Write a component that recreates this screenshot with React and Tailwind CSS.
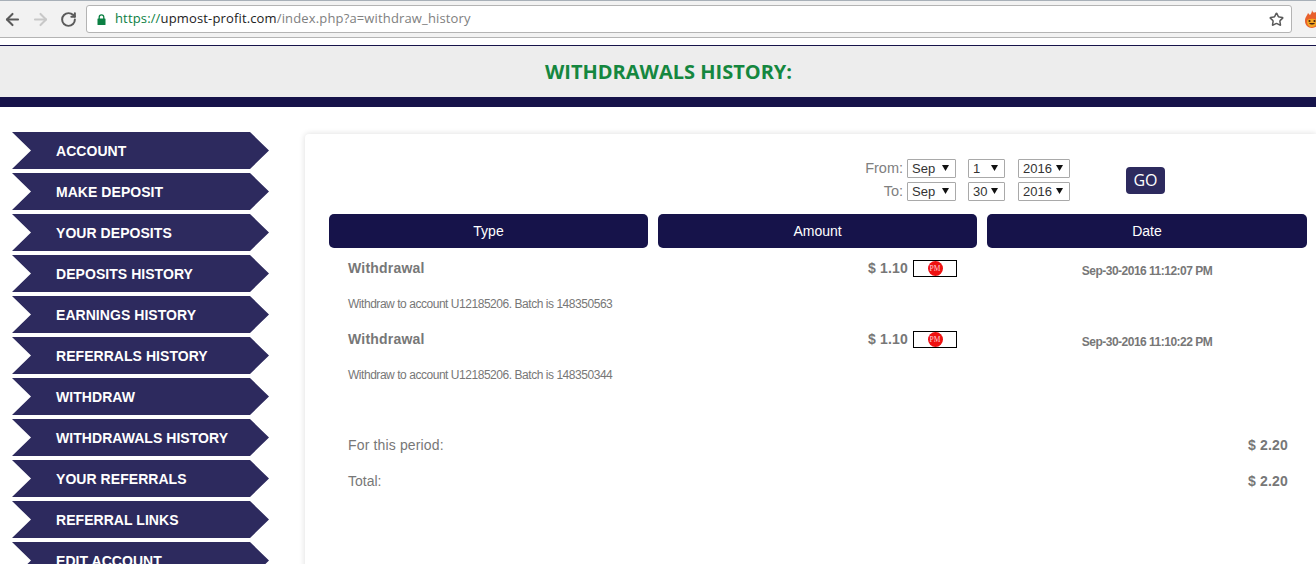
import React from "react";
import { ArrowLeft, ArrowRight, RotateCw, Star } from "lucide-react";

const menu = [
  "ACCOUNT",
  "MAKE DEPOSIT",
  "YOUR DEPOSITS",
  "DEPOSITS HISTORY",
  "EARNINGS HISTORY",
  "REFERRALS HISTORY",
  "WITHDRAW",
  "WITHDRAWALS HISTORY",
  "YOUR REFERRALS",
  "REFERRAL LINKS",
  "EDIT ACCOUNT",
];

const rows = [
  { note: "Withdraw to account U12185206. Batch is 148350563", date: "Sep-30-2016 11:12:07 PM" },
  { note: "Withdraw to account U12185206. Batch is 148350344", date: "Sep-30-2016 11:10:22 PM" },
];

const Drop = ({ value, width }) => (
  <div className={`${width} h-[19px] flex items-center justify-between pl-[4px] pr-[6px] border border-[#a9a9a9] rounded-[1px] bg-white text-[13px] text-[#333]`}>
    <span>{value}</span>
    <svg width="7" height="6" viewBox="0 0 7 6" className="mb-[2px]">
      <path d="M0 0H7L3.5 6Z" fill="#111" />
    </svg>
  </div>
);

const Flame = () => (
  <svg width="16" height="20" viewBox="0 0 16 20">
    <path d="M8 1 C9 4 10 4 12 3 C12 5 15 7 15 12 C15 16 12 19 8 19 C4 19 1 16 1 12 C1 8 3 7 4 4 C5 5 6 6 6 6 C7 5 8 3 8 1Z" fill="#e8602c" />
    <path d="M3 12 C3 9 13 9 13 12 C13 16 11 18 8 18 C5 18 3 16 3 12Z" fill="#f5a623" />
    <circle cx="5.5" cy="12" r="1.1" fill="#4a2410" />
    <circle cx="10.5" cy="12" r="1.1" fill="#4a2410" />
    <path d="M5 14 C6.5 16 9.5 16 11 14Z" fill="#4a2410" />
  </svg>
);

const App = () => {
  return (
    <div className="h-[564px] w-[1316px] overflow-hidden bg-white font-['Liberation_Sans',sans-serif]">
      {/* browser toolbar */}
      <div className="h-[38px] flex items-center bg-[#f2f2f2] border-b border-[#b4b4b4] border-t border-t-[#a8b0b8]">
        <div className="w-[86px] flex items-center gap-[9px] pl-[3px]">
          <ArrowLeft size={19} strokeWidth={2.6} className="text-[#5a5a5a]" />
          <ArrowRight size={19} strokeWidth={2.6} className="text-[#c8c8c8]" />
          <RotateCw size={17} strokeWidth={2.8} className="text-[#5a5a5a] ml-[1px]" />
        </div>
        <div className="w-[1206px] h-[28px] flex items-center justify-between bg-white border border-[#b4b4b4] rounded-[3px] pl-[10px] pr-[7px]">
          <div className="flex items-center gap-[9px] font-['Open_Sans',sans-serif] text-[13px] tracking-[0.15px]">
            <svg width="9" height="11" viewBox="0 0 9 11">
              <path d="M2.2 5V3.2a2.3 2.3 0 0 1 4.6 0V5" fill="none" stroke="#0b8043" strokeWidth="1.3" />
              <rect x="0.5" y="4.5" width="8" height="6.5" rx="0.6" fill="#0b8043" />
            </svg>
            <span>
              <span className="text-[#0b8043]">https://</span>
              <span className="text-[#222]">upmost-profit.com</span>
              <span className="text-[#808080]">/index.php?a=withdraw_history</span>
            </span>
          </div>
          <Star size={15} strokeWidth={2.4} className="text-[#5a5a5a]" />
        </div>
        <div className="ml-[12px] w-[12px] overflow-hidden shrink-0">
          <Flame />
        </div>
      </div>

      <div className="h-[7px] bg-white" />

      {/* page title */}
      <div className="h-[52px] flex items-center justify-center bg-[#ededed] border-t border-[#16134a]">
        <h1 className="font-['Open_Sans',sans-serif] text-[20px] font-bold text-[#15873f] ml-[21px]">WITHDRAWALS HISTORY:</h1>
      </div>
      <div className="h-[10px] bg-[#16134a]" />

      <div className="flex items-start pt-[25px] pl-[12px]">
        {/* side menu */}
        <div className="w-[257px] shrink-0 flex flex-col gap-[4px]">
          {menu.map((item) => (
            <a
              key={item}
              className="h-[37px] flex items-center pl-[44px] pt-[2px] bg-[#2d2a5e] text-white text-[14px] font-bold tracking-[0.05px] [clip-path:polygon(0_0,238px_0,100%_50%,238px_100%,0_100%,19px_50%)]"
            >
              {item}
            </a>
          ))}
        </div>

        {/* main card */}
        <div className="ml-[36px] mt-[2px] w-[1011px] h-[440px] shrink-0 bg-white rounded-tl-[4px] shadow-[0_0_6px_rgba(0,0,0,0.14)] pl-[24px] pr-[9px] pt-[25px]">
          <div className="flex items-center text-[14.5px] leading-[19px] text-[#808080]">
            <div className="ml-[534px] flex flex-col gap-[4px]">
              {[
                ["From:", "Sep", "1", "2016"],
                ["To:", "Sep", "30", "2016"],
              ].map(([label, m, d, y]) => (
                <div key={label} className="flex items-center">
                  <span className="w-[40px] text-right mr-[4px]">{label}</span>
                  <Drop value={m} width="w-[49px]" />
                  <div className="w-[12px]" />
                  <Drop value={d} width="w-[37px]" />
                  <div className="w-[13px]" />
                  <Drop value={y} width="w-[52px]" />
                </div>
              ))}
            </div>
            <button className="ml-[56px] w-[39px] h-[27px] bg-[#2d2a5e] rounded-[4px] text-white text-[16px] font-['Open_Sans',sans-serif]">GO</button>
          </div>

          <div className="mt-[13px] grid grid-cols-[319px_319px_320px] gap-[10px]">
            {["Type", "Amount", "Date"].map((h) => (
              <div key={h} className="h-[34px] flex items-center justify-center bg-[#16134a] rounded-[5px] text-white text-[14px]">
                {h}
              </div>
            ))}
          </div>

          <div className="text-[#777]">
            {rows.map((r) => (
              <div key={r.note} className="h-[71px] pt-[8px]">
                <div className="h-[18px] grid grid-cols-[319px_319px_320px] gap-[10px] items-center">
                  <div className="pl-[19px] text-[14px] font-bold tracking-[0.2px]">Withdrawal</div>
                  <div className="flex items-center justify-end pr-[20px]">
                    <span className="text-[14px] font-bold tracking-[0.2px] mr-[5px]">$ 1.10</span>
                    <div className="w-[44px] h-[17px] mt-[1px] flex items-center justify-center border border-black bg-white">
                      <div className="w-[15px] h-[15px] rounded-full bg-[#ee1111] flex items-center justify-center text-[7.5px] leading-none text-[#ffd0d0] font-['Liberation_Serif',serif]">PM</div>
                    </div>
                  </div>
                  <div className="text-center text-[12px] font-bold pt-[6px] tracking-[-0.5px]">{r.date}</div>
                </div>
                <div className="mt-[21px] pl-[19px] text-[12px] tracking-[-0.46px]">{r.note}</div>
              </div>
            ))}

            <div className="mt-[37px] text-[14px]">
              <div className="h-[36px] flex items-center justify-between pl-[19px] pr-[19px]">
                <span className="tracking-[0.15px]">For this period:</span>
                <span className="font-bold tracking-[0.2px]">$ 2.20</span>
              </div>
              <div className="h-[36px] flex items-center justify-between pl-[19px] pr-[19px]">
                <span>Total:</span>
                <span className="font-bold tracking-[0.2px]">$ 2.20</span>
              </div>
            </div>
          </div>
        </div>
      </div>
    </div>
  );
};

export default App;
